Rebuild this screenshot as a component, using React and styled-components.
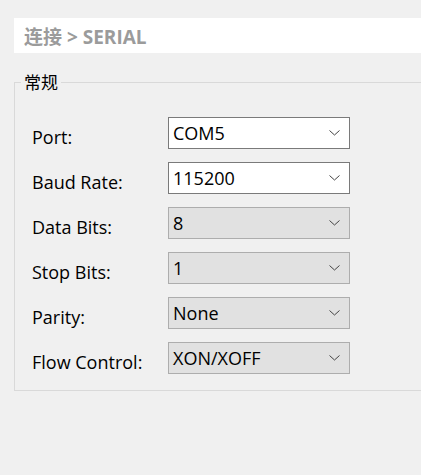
import React from "react";
import styled, { createGlobalStyle } from "styled-components";

const GlobalStyle = createGlobalStyle`
  html, body {
    margin: 0;
    padding: 0;
    background: #f0f0f0;
    overflow: hidden;
  }
  body {
    font-family: "Open Sans", "Noto Sans CJK SC", sans-serif;
    color: #000000;
  }
`;

const fields = [
  { label: "Port:", value: "COM5", enabled: true },
  { label: "Baud Rate:", value: "115200", enabled: true },
  { label: "Data Bits:", value: "8", enabled: false },
  { label: "Stop Bits:", value: "1", enabled: false },
  { label: "Parity:", value: "None", enabled: false },
  { label: "Flow Control:", value: "XON/XOFF", enabled: false },
];

const Chevron = () => (
  <svg width="11" height="6" viewBox="0 0 11 6">
    <polyline points="0.5,0.5 5.5,5 10.5,0.5" fill="none" stroke="#444" strokeWidth="1" />
  </svg>
);

const App = () => {
  return (
    <Page>
      <GlobalStyle />
      <Breadcrumb>
        <Crumb>连接 &gt; SERIAL</Crumb>
      </Breadcrumb>

      <Group>
        <Legend>常规</Legend>
        <Rows>
          {fields.map((f) => (
            <Row key={f.label}>
              <Label>{f.label}</Label>
              <Select $enabled={f.enabled}>
                <span>{f.value}</span>
                <Chevron />
              </Select>
            </Row>
          ))}
        </Rows>
      </Group>
    </Page>
  );
};

const Page = styled.div`
  width: 421px;
  height: 475px;
  padding-top: 18px;
  box-sizing: border-box;
`;

const Breadcrumb = styled.div`
  margin-left: 14px;
  height: 35px;
  background: #ffffff;
  display: flex;
  align-items: center;
  padding-left: 10px;
`;

const Crumb = styled.div`
  font-family: "Open Sans", "Noto Sans CJK SC", sans-serif;
  font-weight: 700;
  font-size: 19px;
  color: #9b9b9b;
`;

const Group = styled.fieldset`
  margin: 20px -20px 0 14px;
  padding: 0;
  border: 1px solid #d9d9d9;
`;

const Legend = styled.legend`
  margin-left: 6px;
  padding: 0 3px;
  font-family: "Noto Sans CJK SC", sans-serif;
  font-size: 17px;
  line-height: 18px;
  color: #000000;
`;

const Rows = styled.div`
  display: flex;
  flex-direction: column;
  gap: 13px;
  padding: 26px 0 16px 17px;
`;

const Row = styled.div`
  display: flex;
  align-items: center;
`;

const Label = styled.div`
  width: 136px;
  font-size: 18px;
  padding-top: 7px;
  color: #000000;
`;

const Select = styled.div`
  width: 182px;
  height: 32px;
  box-sizing: border-box;
  display: flex;
  align-items: center;
  justify-content: space-between;
  padding: 0 9px 0 4px;
  font-size: 18px;
  background: ${(p) => (p.$enabled ? "#ffffff" : "#e1e1e1")};
  border: 1px solid ${(p) => (p.$enabled ? "#7a7a7a" : "#adadad")};
`;

export default App;
